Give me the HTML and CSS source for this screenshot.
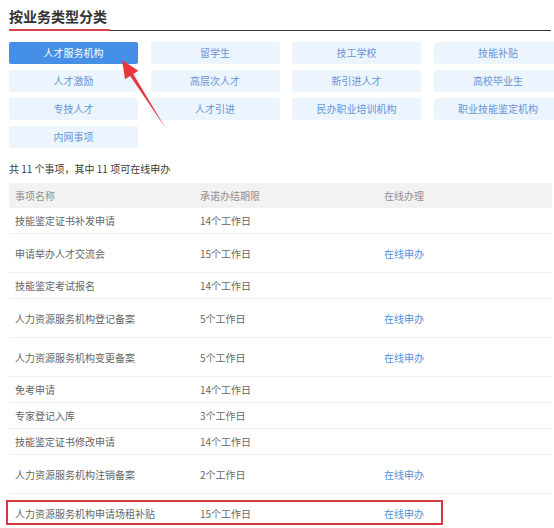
FILE: index.html
```html
<!DOCTYPE html>
<html lang="zh-CN">
<head>
<meta charset="utf-8">
<title>按业务类型分类</title>
<link rel="stylesheet" href="styles.css">
</head>
<body>
<div class="page">
  <h2 class="title">按业务类型分类</h2>
  <div class="title-line"><span class="accent"></span><span class="rest"></span></div>

  <div class="cats">
    <a class="cat active">人才服务机构</a>
    <a class="cat">留学生</a>
    <a class="cat">技工学校</a>
    <a class="cat">技能补贴</a>
    <a class="cat">人才激励</a>
    <a class="cat">高层次人才</a>
    <a class="cat">新引进人才</a>
    <a class="cat">高校毕业生</a>
    <a class="cat">专技人才</a>
    <a class="cat">人才引进</a>
    <a class="cat">民办职业培训机构</a>
    <a class="cat">职业技能鉴定机构</a>
    <a class="cat">内网事项</a>
  </div>

  <p class="summary">共 11 个事项，其中 11 项可在线申办</p>

  <table class="items">
    <colgroup><col class="c1"><col class="c2"><col class="c3"></colgroup>
    <thead>
      <tr><th>事项名称</th><th>承诺办结期限</th><th>在线办理</th></tr>
    </thead>
    <tbody>
      <tr><td>技能鉴定证书补发申请</td><td>14个工作日</td><td></td></tr>
      <tr><td>申请举办人才交流会</td><td>15个工作日</td><td><a class="apply">在线申办</a></td></tr>
      <tr><td>技能鉴定考试报名</td><td>14个工作日</td><td></td></tr>
      <tr><td>人力资源服务机构登记备案</td><td>5个工作日</td><td><a class="apply">在线申办</a></td></tr>
      <tr><td>人力资源服务机构变更备案</td><td>5个工作日</td><td><a class="apply">在线申办</a></td></tr>
      <tr><td>免考申请</td><td>14个工作日</td><td></td></tr>
      <tr><td>专家登记入库</td><td>3个工作日</td><td></td></tr>
      <tr><td>技能鉴定证书修改申请</td><td>14个工作日</td><td></td></tr>
      <tr><td>人力资源服务机构注销备案</td><td>2个工作日</td><td><a class="apply">在线申办</a></td></tr>
      <tr><td>人力资源服务机构申请场租补贴</td><td>15个工作日</td><td><a class="apply">在线申办</a></td></tr>
    </tbody>
  </table>

  <svg class="arrow" width="554" height="528" viewBox="0 0 554 528" aria-hidden="true">
    <polygon points="122,60 138.4,70.7 133.2,74 165.5,128 130.2,76 125,79.3" fill="#e8373c"/>
  </svg>
  <div class="highlight"></div>
</div>
</body>
</html>
```

FILE: styles.css
```css
html, body {
  margin: 0;
  padding: 0;
  overflow: hidden;
  background: #ffffff;
}

.page {
  position: relative;
  width: 554px;
  height: 528px;
  padding-left: 9px;
  box-sizing: border-box;
  font-family: "Noto Sans CJK SC", "Microsoft YaHei", sans-serif;
  color: #333333;
}

.title {
  margin: 0;
  padding-top: 7px;
  height: 22px;
  font-size: 14px;
  line-height: 18px;
  font-weight: bold;
  color: #333333;
}

.title-line {
  display: flex;
  width: 542px;
  height: 2px;
}

.title-line .accent {
  width: 101px;
  background: #d9454a;
}

.title-line .rest {
  flex: 1;
  background: #3a3a3a;
  height: 1.5px;
  margin-top: 0.5px;
}

.cats {
  display: grid;
  grid-template-columns: repeat(4, 129px);
  column-gap: 12.5px;
  row-gap: 6px;
  margin-top: 11px;
  width: 560px;
}

.cat {
  display: block;
  height: 22px;
  line-height: 22px;
  text-align: center;
  font-size: 10px;
  color: #6694d8;
  background: #ecf4fd;
  border-radius: 2px;
}

.cat.active {
  background: #4590e6;
  color: #ffffff;
}

.summary {
  margin: 14px 0 0;
  font-size: 10px;
  line-height: 14px;
  color: #3a3a3a;
}

.items {
  margin-top: 7px;
  width: 543px;
  border-collapse: collapse;
  table-layout: fixed;
  font-size: 10px;
}

.items col.c1 { width: 185px; }
.items col.c2 { width: 184px; }

.items th {
  background: #f2f2f2;
  color: #909090;
  font-weight: normal;
  text-align: left;
  padding: 6px 6px;
  line-height: 13px;
}

.items td {
  padding: 6px 6px;
  line-height: 13px;
  color: #666666;
  border-bottom: 1px solid #eeeeee;
  vertical-align: middle;
}

.items td .apply {
  display: inline-block;
  padding: 6.5px 0;
  color: #5290d8;
}

.arrow {
  position: absolute;
  left: 0;
  top: 0;
  pointer-events: none;
}

.highlight {
  position: absolute;
  left: 6px;
  top: 500px;
  width: 433px;
  height: 21px;
  border: 2px solid #d33a3e;
  pointer-events: none;
}
```
